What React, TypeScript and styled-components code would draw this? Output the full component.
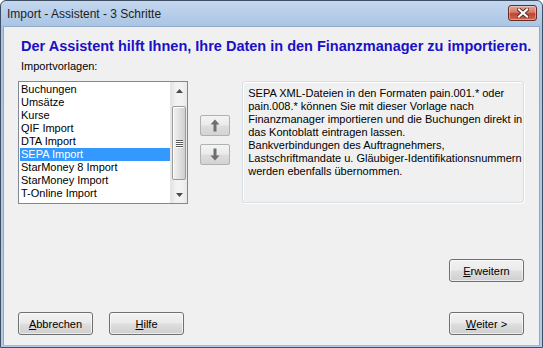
import React from 'react'
import styled, { createGlobalStyle } from 'styled-components'

const GlobalStyle = createGlobalStyle`
    html, body {
        margin: 0;
        padding: 0;
        background: #ffffff;
    }
    body {
        font-family: "Liberation Sans", Arial, sans-serif;
        font-size: 11px;
        color: #000;
    }
`

const Window = styled.div`
    width: 543px;
    height: 348px;
    box-sizing: border-box;
    border: 1px solid #3f4f63;
    border-radius: 6px 6px 0 0;
    background: linear-gradient(#c4d7ee, #a9c4e4 26px, #b3cbe8 100%);
    display: flex;
    flex-direction: column;
    overflow: hidden;
`

const TitleBar = styled.div`
    height: 25px;
    display: flex;
    align-items: center;
    padding: 0 5px 0 6px;
    flex-shrink: 0;
`

const Title = styled.div`
    font-family: "Liberation Sans", Arial, sans-serif;
    font-size: 12px;
    color: #1e1e1e;
    flex: 1;
`

const CloseButton = styled.div`
    width: 29px;
    height: 16px;
    box-sizing: border-box;
    border: 1px solid #6a2b24;
    border-radius: 3px;
    background: linear-gradient(#e4a597, #d47a6a 45%, #c0442f 55%, #cf6a52);
    box-shadow: inset 0 0 0 1px rgba(255, 255, 255, 0.35);
    display: flex;
    align-items: center;
    justify-content: center;
    margin-top: -2px;
`

const Panel = styled.div`
    flex: 1;
    margin: 0 2px 1px 2px;
    background: #f0f0f0;
    border: 1px solid #8fa9c6;
    border-bottom-color: #6fd0f0;
    display: flex;
    flex-direction: column;
    padding: 8px 15px 10px 14px;
`

const Heading = styled.h1`
    margin: 3px 0 0 3px;
    font-family: "Liberation Sans", Arial, sans-serif;
    font-size: 14.5px;
    font-weight: bold;
    line-height: 17px;
    color: #1a10c6;
    white-space: nowrap;
`

const Label = styled.div`
    margin: 5px 0 0 3px;
    height: 13px;
    line-height: 13px;
`

const MainRow = styled.div`
    display: flex;
    align-items: flex-start;
    margin-top: 8px;
`

const ListBox = styled.div`
    width: 171px;
    height: 123px;
    box-sizing: border-box;
    border: 1px solid #828790;
    background: #fff;
    display: flex;
    padding: 1px;
`

const Items = styled.div`
    flex: 1;
    display: flex;
    flex-direction: column;
`

const Item = styled.div<{ $selected?: boolean }>`
    height: 13px;
    line-height: 13px;
    padding-left: 1px;
    white-space: nowrap;
    background: ${p => (p.$selected ? '#3399ff' : 'transparent')};
    color: ${p => (p.$selected ? '#fff' : '#000')};
`

const ScrollBar = styled.div`
    width: 16px;
    margin: -1px -1px -1px 0;
    background: linear-gradient(90deg, #e3e3e3, #f2f2f2 30%, #f2f2f2 70%, #e8e8e8);
    border-left: 1px solid #e6e6e6;
    display: flex;
    flex-direction: column;
    align-items: center;
`

const ScrollArrow = styled.div`
    height: 17px;
    width: 100%;
    display: flex;
    align-items: center;
    justify-content: center;
`

const ScrollTrack = styled.div`
    flex: 1;
    width: 100%;
    display: flex;
    flex-direction: column;
    padding-top: 7px;
    box-sizing: border-box;
`

const Thumb = styled.div`
    margin: 0 1px;
    height: 74px;
    box-sizing: border-box;
    border: 1px solid #9a9a9a;
    border-radius: 2px;
    background: linear-gradient(90deg, #f1f1f1, #e2e2e2 50%, #cfcfcf);
    box-shadow: inset 1px 1px 0 #fff;
    display: flex;
    flex-direction: column;
    align-items: center;
    justify-content: center;
    gap: 1px;
`

const Grip = styled.div`
    width: 7px;
    height: 1px;
    background: #5a5a5a;
    box-shadow: 0 1px 0 #fff;
`

const ArrowColumn = styled.div`
    display: flex;
    flex-direction: column;
    gap: 8px;
    margin: 34px 12px 0 12px;
`

const ArrowButton = styled.div`
    width: 30px;
    height: 21px;
    box-sizing: border-box;
    border: 1px solid #adb2b5;
    border-radius: 2px;
    background: linear-gradient(#f4f4f4, #ebebeb 45%, #dddddd 55%, #d3d3d3);
    display: flex;
    align-items: center;
    justify-content: center;
`

const Description = styled.div`
    width: 283px;
    height: 122px;
    box-sizing: border-box;
    border: 1px solid #d5dfe5;
    border-radius: 3px;
    box-shadow: inset 1px 1px 0 #fff, 1px 1px 0 #fff;
    padding: 5px 2px 0 5px;
    line-height: 13px;
    overflow: hidden;
`

const DescLine = styled.div`
    white-space: nowrap;
`

const Spacer = styled.div`
    flex: 1;
`

const RightRow = styled.div`
    display: flex;
    justify-content: flex-end;
    margin-top: 55px;
`

const ButtonRow = styled.div`
    display: flex;
    gap: 16px;
`

const Button = styled.div`
    width: 75px;
    height: 23px;
    box-sizing: border-box;
    border: 1px solid #707070;
    border-radius: 3px;
    background: linear-gradient(#f2f2f2, #ebebeb 45%, #dddddd 55%, #cfcfcf);
    box-shadow: inset 0 0 0 1px rgba(255, 255, 255, 0.6);
    display: flex;
    align-items: center;
    justify-content: center;
    color: #000;
    font-size: 11px;

    u {
        text-decoration: underline;
        text-underline-offset: 1px;
    }
`

const Push = styled.div`
    margin-left: auto;
`

const templates = [
    'Buchungen',
    'Umsätze',
    'Kurse',
    'QIF Import',
    'DTA Import',
    'SEPA Import',
    'StarMoney 8 Import',
    'StarMoney Import',
    'T-Online Import',
]

const description = [
    'SEPA XML-Dateien in den Formaten pain.001.* oder',
    'pain.008.* können Sie mit dieser Vorlage nach',
    'Finanzmanager importieren und die Buchungen direkt in',
    'das Kontoblatt eintragen lassen.',
    'Bankverbindungen des Auftragnehmers,',
    'Lastschriftmandate u. Gläubiger-Identifikationsnummern',
    'werden ebenfalls übernommen.',
]

const CloseIcon = () => (
    <svg width="12" height="10" viewBox="0 0 12 10">
        <path d="M2 1.5 L10 8.5 M10 1.5 L2 8.5" stroke="#5a2a24" strokeWidth="4" strokeLinecap="square" />
        <path d="M2 1.5 L10 8.5 M10 1.5 L2 8.5" stroke="#ffffff" strokeWidth="2.2" strokeLinecap="square" />
    </svg>
)

const Arrow = ({ up }: { up?: boolean }) => (
    <svg width="10" height="13" viewBox="0 0 10 13" style={up ? undefined : { transform: 'rotate(180deg)' }}>
        <path d="M5 0.5 L9.5 5.5 L6.5 5.5 L6.5 12.5 L3.5 12.5 L3.5 5.5 L0.5 5.5 Z" fill="#6e6e6e" />
    </svg>
)

const SmallTriangle = ({ up }: { up?: boolean }) => (
    <svg width="7" height="4" viewBox="0 0 7 4">
        <path d={up ? 'M0 4 L3.5 0 L7 4 Z' : 'M0 0 L3.5 4 L7 0 Z'} fill="#4a4a4a" />
    </svg>
)

const App: React.FC = () => {
    return (
        <>
            <GlobalStyle />
            <Window>
                <TitleBar>
                    <Title>Import - Assistent - 3 Schritte</Title>
                    <CloseButton><CloseIcon /></CloseButton>
                </TitleBar>
                <Panel>
                    <Heading>Der Assistent hilft Ihnen, Ihre Daten in den Finanzmanager zu importieren.</Heading>
                    <Label>Importvorlagen:</Label>
                    <MainRow>
                        <ListBox>
                            <Items>
                                {templates.map(t => (
                                    <Item key={t} $selected={t === 'SEPA Import'}>{t}</Item>
                                ))}
                            </Items>
                            <ScrollBar>
                                <ScrollArrow><SmallTriangle up /></ScrollArrow>
                                <ScrollTrack>
                                    <Thumb>
                                        <Grip /><Grip /><Grip /><Grip />
                                    </Thumb>
                                </ScrollTrack>
                                <ScrollArrow><SmallTriangle /></ScrollArrow>
                            </ScrollBar>
                        </ListBox>
                        <ArrowColumn>
                            <ArrowButton><Arrow up /></ArrowButton>
                            <ArrowButton><Arrow /></ArrowButton>
                        </ArrowColumn>
                        <Description>
                            {description.map(line => (
                                <DescLine key={line}>{line}</DescLine>
                            ))}
                        </Description>
                    </MainRow>
                    <RightRow>
                        <Button><u>E</u>rweitern</Button>
                    </RightRow>
                    <Spacer />
                    <ButtonRow>
                        <Button><u>A</u>bbrechen</Button>
                        <Button><u>H</u>ilfe</Button>
                        <Push>
                            <Button><u>W</u>eiter &gt;</Button>
                        </Push>
                    </ButtonRow>
                </Panel>
            </Window>
        </>
    )
}

export default App
